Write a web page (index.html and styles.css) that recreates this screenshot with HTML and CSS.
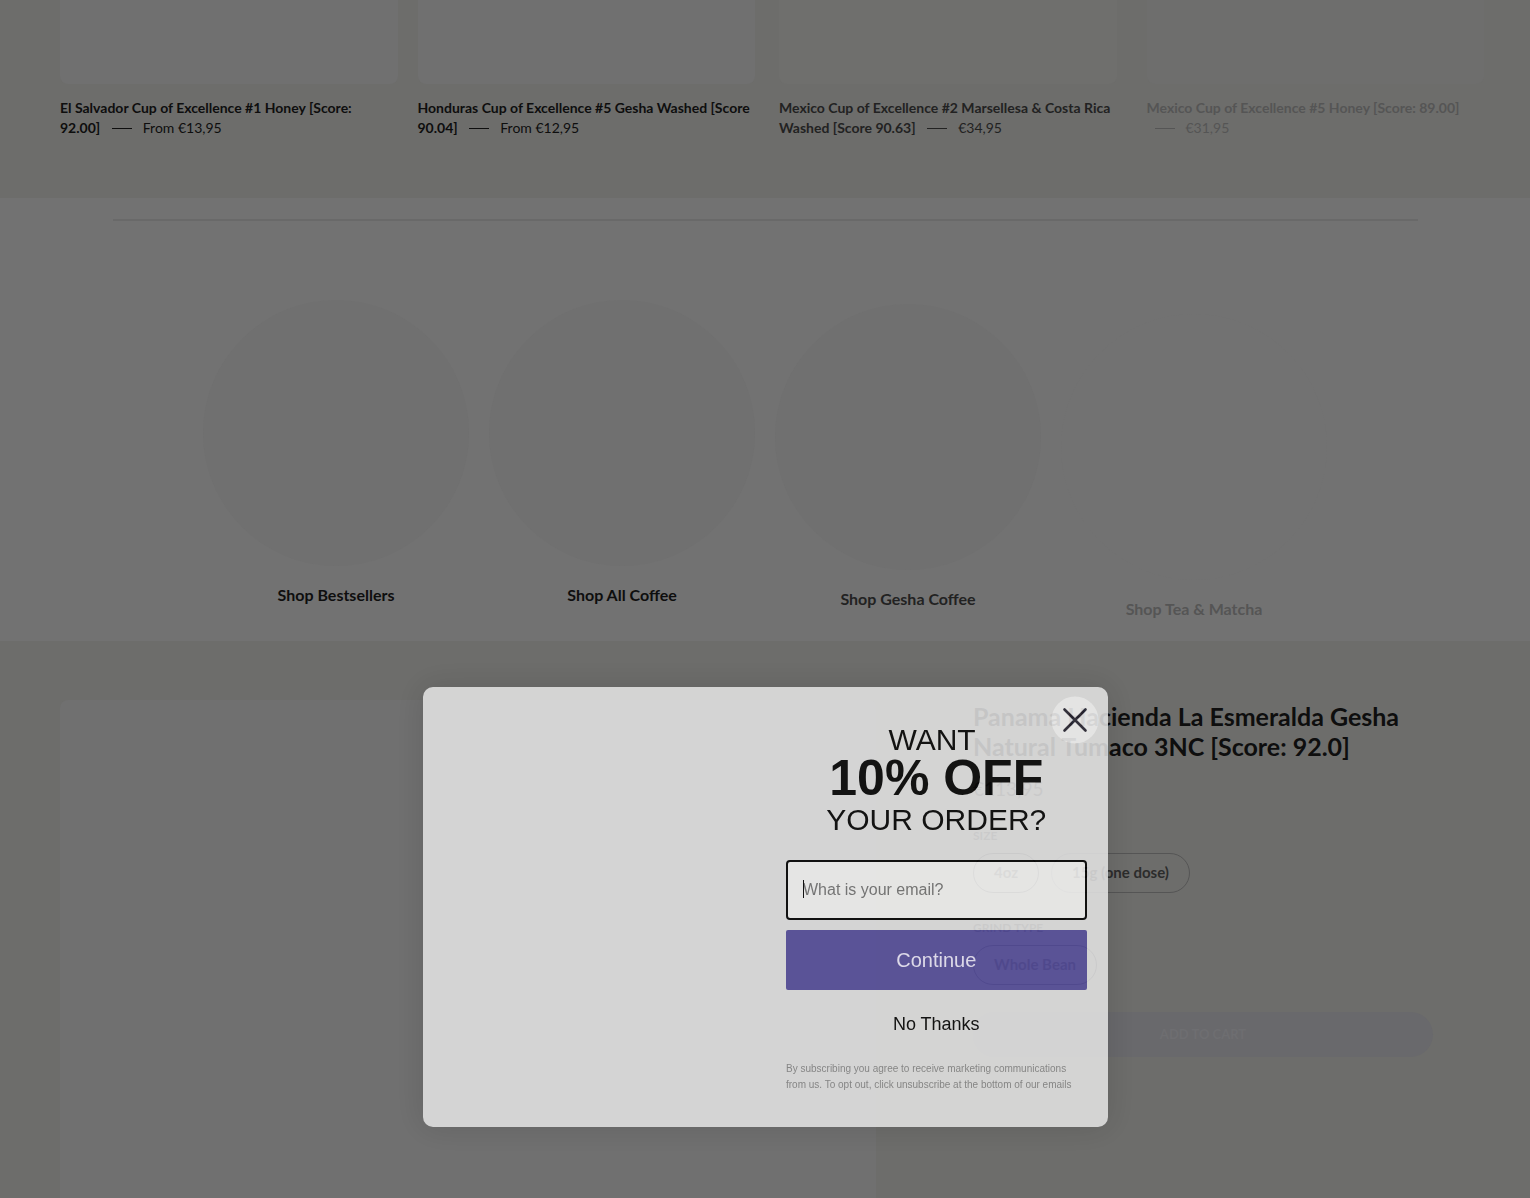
FILE: index.html
```html
<!DOCTYPE html>
<html lang="en">
<head>
  <meta charset="UTF-8" />
  <meta name="viewport" content="width=device-width, initial-scale=1" />
  <title>Specialty Coffee</title>
  <link rel="stylesheet" href="styles.css">
</head>
<body>
  <!-- Product row -->
  <section class="products">
    <article class="product">
      <div class="product-media"></div>
      <p class="product-text"><a href="#">El Salvador Cup of Excellence #1 Honey [Score:<br>92.00]</a> <span class="price">From €13,95</span></p>
    </article>
    <article class="product">
      <div class="product-media"></div>
      <p class="product-text"><a href="#">Honduras Cup of Excellence #5 Gesha Washed [Score 90.04]</a> <span class="price">From €12,95</span></p>
    </article>
    <article class="product reveal-x reveal-mid">
      <div class="product-media warm"></div>
      <p class="product-text"><a href="#">Mexico Cup of Excellence #2 Marsellesa &amp; Costa Rica Washed [Score 90.63]</a> <span class="price">€34,95</span></p>
    </article>
    <article class="product reveal-x reveal-start">
      <div class="product-media"></div>
      <p class="product-text"><a href="#">Mexico Cup of Excellence #5 Honey [Score: 89.00]</a> <span class="price">€31,95</span></p>
    </article>
  </section>

  <!-- Collections -->
  <section class="collections">
    <hr>
    <div class="collection-list">
      <a class="collection" href="#"><span class="circle"></span>Shop Bestsellers</a>
      <a class="collection" href="#"><span class="circle"></span>Shop All Coffee</a>
      <a class="collection reveal-y reveal-mid" href="#"><span class="circle"></span>Shop Gesha Coffee</a>
      <a class="collection reveal-y reveal-start" href="#"><span class="circle"></span>Shop Tea &amp; Matcha</a>
    </div>
  </section>

  <!-- Featured product -->
  <section class="featured">
    <div class="featured-media"></div>
    <div class="featured-info">
      <h2>Panama Hacienda La Esmeralda Gesha Natural Tumaco 3NC [Score: 92.0]</h2>
      <p class="featured-price">€113,95</p>
      <p class="option-name">SIZE</p>
      <div class="options">
        <button class="option" type="button">4oz</button>
        <button class="option" type="button">15g (one dose)</button>
      </div>
      <p class="option-name">GRIND TYPE</p>
      <div class="options">
        <button class="option" type="button">Whole Bean</button>
      </div>
      <button class="add-to-cart" type="button">ADD TO CART</button>
    </div>
  </section>

  <!-- Newsletter popup -->
  <div class="popup-wrap">
    <div class="popup" role="dialog" aria-label="Newsletter signup">
      <button class="close-btn" type="button" aria-label="Close dialog">
        <svg viewBox="0 0 48 48" width="48" height="48">
          <circle cx="24" cy="24" r="23.5" fill="#fafafa"/>
          <path d="M13.5 13.5L34.5 34.5M34.5 13.5L13.5 34.5" stroke="#292633" stroke-width="2.6" stroke-linecap="round"/>
        </svg>
      </button>
      <form class="popup-form">
        <h3>WANT&nbsp;<strong>10% OFF</strong>YOUR ORDER?</h3>
        <div class="email-field">
          <input type="email" name="email" aria-label="What is your email?" placeholder="What is your email?" autofocus>
        </div>
        <button class="continue-btn" type="submit">Continue</button>
        <button class="dismiss-btn" type="button">No Thanks</button>
        <p class="disclaimer">By subscribing you agree to receive marketing communications from us. To opt out, click unsubscribe at the bottom of our emails</p>
      </form>
    </div>
  </div>
</body>
</html>
```

FILE: styles.css
```css
:root {
  --bg: #727272;
  --bg-warm: #6d6d6b;
  --media: #707070;
  --ink: #0e0e0e;
  --font-shop: Lato, sans-serif;
  --font-popup: "Liberation Sans", Arial, sans-serif;
}
* {
  box-sizing: border-box;
}
body {
  margin: 0;
  min-height: 100vh;
  display: flex;
  flex-direction: column;
  background: var(--bg);
  color: var(--ink);
  font-family: var(--font-shop);
}
a {
  color: inherit;
  text-decoration: none;
}
p, h2, h3 {
  margin: 0;
}
button {
  font-family: inherit;
  cursor: pointer;
}

/* items still sliding into view */
.reveal-mid {
  --shift: 4px;
  color: #222;
}
.reveal-start {
  --shift: 14px;
  color: #555;
}
.reveal-x {
  transform: translateX(var(--shift));
}
.reveal-y {
  transform: translateY(var(--shift));
}

.products {
  display: grid;
  grid-template-columns: repeat(4, 1fr);
  gap: 20px;
  padding: 0 60px 60px;
  background: var(--bg-warm);
}
.product-media {
  height: 84px;
  margin-bottom: 14px;
  border-radius: 0 0 8px 8px;
  background: var(--media);
}
.product-media.warm {
  background: #6f6f6d;
}
.reveal-start .product-media {
  background: #6e6e6d;
}
.product-text {
  font-size: 14px;
  line-height: 20px;
}
.product-text a {
  font-weight: 700;
}
.price {
  display: inline-block;
}
.price::before {
  content: "";
  display: inline-block;
  width: 20px;
  height: 1px;
  margin: 0 11px 4px 8px;
  background: currentColor;
}

.collections {
  padding: 21px 0 34px;
}
.collections hr {
  width: 1305px;
  max-width: 90%;
  height: 2px;
  margin: 0 auto 79px;
  border: 0;
  background: #696969;
}
.collection-list {
  display: grid;
  grid-template-columns: repeat(4, 1fr);
  gap: 20px;
  max-width: 1124px;
  margin: 0 auto;
}
.collection {
  font-size: 16px;
  font-weight: 700;
  line-height: 24px;
  text-align: center;
}
.circle {
  display: block;
  aspect-ratio: 1;
  margin-bottom: 17px;
  border-radius: 50%;
  background: #707070;
}
.reveal-start .circle {
  background: var(--bg);
}

.featured {
  flex: 1;
  display: grid;
  grid-template-columns: 816fr 594fr;
  padding: 59px 60px 0;
  background: var(--bg-warm);
}
.featured-media {
  border-radius: 8px 8px 0 0;
  background: var(--media);
}
.featured-info {
  padding: 1px 37px 0 97px;
}
.featured-info h2 {
  font-size: 25px;
  line-height: 30px;
}
.featured-price {
  margin-top: 16px;
  font-size: 19px;
  line-height: 24px;
  color: #2a2a2a;
}
.option-name {
  margin-top: 27px;
  font-size: 12px;
  font-weight: 700;
  line-height: 16px;
  color: #333;
}
.options {
  display: flex;
  gap: 12px;
  margin-top: 9px;
}
.option {
  height: 40px;
  padding: 0 20px 2px;
  border: 1px solid #555;
  border-radius: 20px;
  background: transparent;
  font-size: 15px;
  font-weight: 700;
  color: #2c2c2b;
}
.option:first-child {
  border-color: #333;
}
.add-to-cart {
  width: 100%;
  height: 45px;
  margin-top: 27px;
  padding: 0 0 2px;
  border: 0;
  border-radius: 23px;
  background: #69696c;
  font-size: 13px;
  font-weight: 700;
  color: #6e6e71;
}

.popup-wrap {
  position: fixed;
  inset: 0;
  display: flex;
  justify-content: center;
  align-items: flex-end;
  padding-bottom: 71px;
}
.popup {
  position: relative;
  width: 685px;
  display: grid;
  grid-template-columns: 1fr 1fr;
  border-radius: 10px;
  background: #e7e7e7;
  box-shadow: 0 0 30px rgba(0, 0, 0, 0.15);
  font-family: var(--font-popup);
  color: #030303;
  opacity: 0.85;
}
.close-btn {
  position: absolute;
  top: 9px;
  right: 9px;
  padding: 0;
  border: 0;
  background: none;
}
.close-btn svg {
  display: block;
}
.popup-form {
  grid-column: 2;
  display: flex;
  flex-direction: column;
  padding: 35px 21px 34px;
}
.popup-form h3 {
  margin-bottom: 22px;
  font-size: 30px;
  font-weight: 400;
  line-height: 36px;
  text-align: center;
}
.popup-form strong {
  display: block;
  margin-bottom: 4px;
  font-size: 50px;
  line-height: 40px;
}
.email-field {
  position: relative;
}
/* text cursor */
.email-field::after {
  content: "";
  position: absolute;
  top: 20px;
  left: 17px;
  width: 1px;
  height: 18px;
  background: #000;
}
.popup-form input {
  display: block;
  width: 100%;
  height: 60px;
  padding: 0 15px;
  border: 2px solid #000;
  border-radius: 4px;
  outline: 0;
  background: #fbfbfa;
  font-family: inherit;
  font-size: 16px;
  caret-color: transparent;
}
.popup-form input::placeholder {
  color: #757575;
}
.continue-btn {
  height: 60px;
  margin-top: 10px;
  border: 0;
  border-radius: 2px;
  background: #574e9f;
  font-size: 20px;
  color: #f0ecff;
}
.dismiss-btn {
  height: 48px;
  margin-top: 10px;
  padding: 0;
  border: 0;
  background: none;
  font-size: 18px;
  color: inherit;
}
.disclaimer {
  margin-top: 13px;
  font-size: 10px;
  line-height: 16px;
  color: #8a8a8a;
}
```
